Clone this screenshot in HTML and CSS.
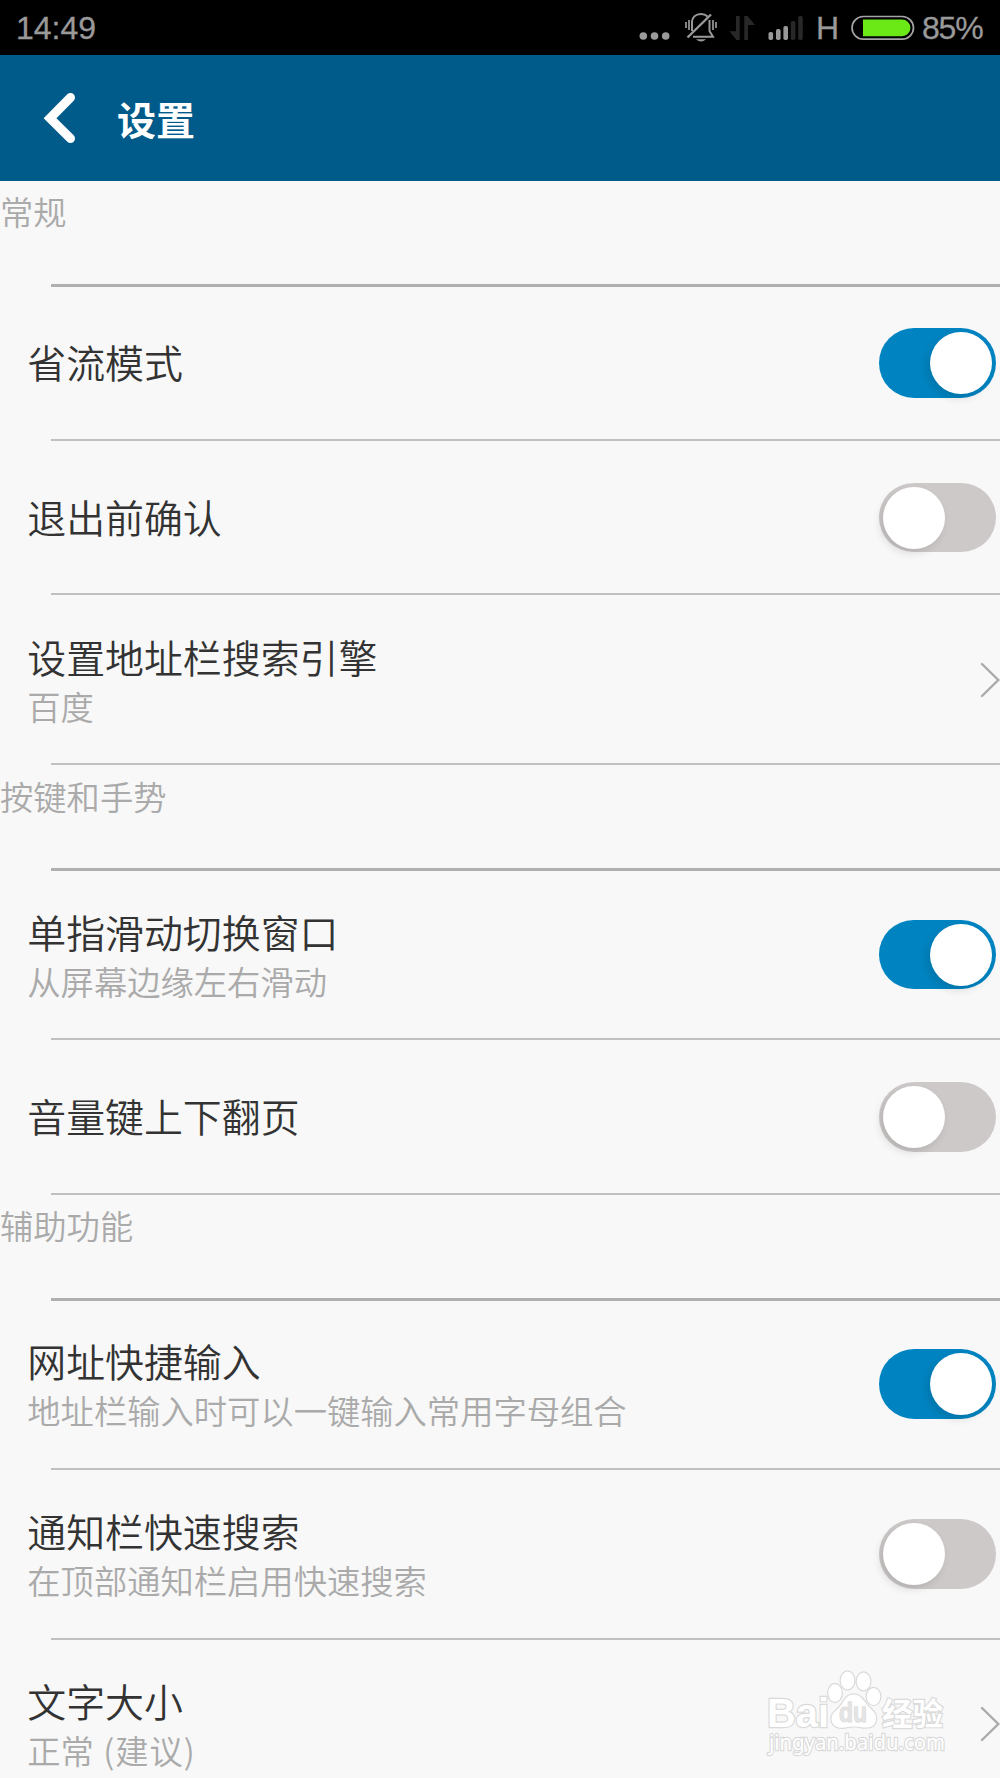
FILE: index.html
```html
<!DOCTYPE html>
<html lang="zh-CN">
<head>
    <meta charset="UTF-8">
    <meta name="viewport" content="width=device-width, initial-scale=1.0">
    <title>设置</title>
    <link rel="stylesheet" href="styles.css">
</head>
<body>
    <div class="status-bar">
        <span class="time">14:49</span>
        <svg class="status-icons" width="172" height="55" viewBox="635 0 172 55">
            <g fill="#999">
                <circle cx="643.3" cy="36" r="3.8"/>
                <circle cx="654.5" cy="36" r="3.8"/>
                <circle cx="665.7" cy="36" r="3.8"/>
            </g>
            <!-- muted bell -->
            <g fill="none" stroke="#999" stroke-width="2">
                <path d="M711 14.500 L687.500 37.500" stroke-width="2.400"/>
                <path d="M692 31 V23 C692 17 696 14 701 14 C704 14 706 15 707.500 16.500"/>
                <path d="M709.500 20 V31 L713 36.700 H693"/>
                <path d="M689 20 V30 M686 22 V28 M713 20 V30 M716 22 V28" stroke-width="1.700"/>
            </g>
            <path d="M696 39.200 H706 Q701 44 696 39.200Z" fill="#999"/>
            <!-- data arrows -->
            <path d="M736 16 h3.700 v24 h-3.200 l-7 -8.800 h6.500z M744.300 40 v-24 h3.200 l7.500 9 h-7 v15z" fill="#282828"/>
            <!-- signal -->
            <g fill="#999">
                <rect x="768.5" y="32" width="4.6" height="8" rx="1.8"/>
                <rect x="776" y="29" width="4.6" height="11" rx="1.8"/>
                <rect x="783.4" y="26" width="4.6" height="14" rx="1.8"/>
                <rect x="790.8" y="21" width="4.6" height="19" rx="1.8" fill="#282828"/>
                <rect x="798.2" y="16" width="4.6" height="24" rx="1.8" fill="#282828"/>
            </g>
        </svg>
        <span class="network">H</span>
        <svg class="battery" width="64" height="26" viewBox="0 0 64 26">
            <rect x="1" y="1.5" width="61.5" height="22.6" rx="11.3" fill="none" stroke="#a5a5a5" stroke-width="1.7"/>
            <path d="M12 4.500 H51 A8.400 8.400 0 0 1 51 21.300 H12Z" fill="#6ae916"/>
        </svg>
        <span class="percent">85%</span>
    </div>

    <div class="header">
        <svg class="back" width="32" height="52" viewBox="0 0 32 52">
            <path d="M27.500 5.500 L7 26.300 L27.500 46.500" fill="none" stroke="#fff" stroke-width="9" stroke-linecap="round"/>
        </svg>
        <h1>设置</h1>
    </div>

    <div class="settings">
        <h2 class="section">常规</h2>
        <div class="row single">
            <div class="title">省流模式</div>
            <div class="toggle on"></div>
        </div>
        <div class="row single">
            <div class="title">退出前确认</div>
            <div class="toggle"></div>
        </div>
        <div class="row">
            <div>
                <div class="title">设置地址栏搜索引擎</div>
                <div class="desc">百度</div>
            </div>
            <svg class="chevron" width="20" height="36" viewBox="0 0 20 36">
                <path d="M2 2 L18.300 18 L2 34" fill="none" stroke="#aaa" stroke-width="2.400" stroke-linecap="round"/>
            </svg>
        </div>

        <h2 class="section">按键和手势</h2>
        <div class="row">
            <div>
                <div class="title">单指滑动切换窗口</div>
                <div class="desc">从屏幕边缘左右滑动</div>
            </div>
            <div class="toggle on"></div>
        </div>
        <div class="row single">
            <div class="title">音量键上下翻页</div>
            <div class="toggle"></div>
        </div>

        <h2 class="section">辅助功能</h2>
        <div class="row">
            <div>
                <div class="title">网址快捷输入</div>
                <div class="desc">地址栏输入时可以一键输入常用字母组合</div>
            </div>
            <div class="toggle on"></div>
        </div>
        <div class="row">
            <div>
                <div class="title">通知栏快速搜索</div>
                <div class="desc">在顶部通知栏启用快速搜索</div>
            </div>
            <div class="toggle"></div>
        </div>
        <div class="row">
            <div>
                <div class="title">文字大小</div>
                <div class="desc">正常 <span class="hint">(建议)</span></div>
            </div>
            <svg class="chevron" width="20" height="36" viewBox="0 0 20 36">
                <path d="M2 2 L18.300 18 L2 34" fill="none" stroke="#aaa" stroke-width="2.400" stroke-linecap="round"/>
            </svg>
        </div>
    </div>

    <svg class="watermark" width="190" height="92" viewBox="0 0 190 92">
        <text class="brand" x="7" y="57" textLength="62" lengthAdjust="spacingAndGlyphs">Bai</text>
        <g class="paw">
            <ellipse cx="75" cy="23" rx="6.8" ry="9"/>
            <ellipse cx="87.5" cy="10.5" rx="6.8" ry="9"/>
            <ellipse cx="103.5" cy="11.5" rx="6.8" ry="9"/>
            <ellipse cx="113.5" cy="26.5" rx="6.8" ry="8.6"/>
            <path d="M93.500 24.500 C101 24.500 104 31 108 36 C113 41 117 44 116 50 C115 57 109 58 103 57.500 C97 56 91 56 85 57.500 C77 59 71 55 71.500 48 C72 42 78 40 82 34 C85 29 87 24.500 93.500 24.500Z"/>
        </g>
        <text class="du" x="79" y="52" textLength="28" lengthAdjust="spacingAndGlyphs">du</text>
        <text class="jingyan" x="122" y="55" textLength="61" lengthAdjust="spacingAndGlyphs">经验</text>
        <text class="url" x="9" y="80" textLength="176" lengthAdjust="spacingAndGlyphs">jingyan.baidu.com</text>
    </svg>
</body>
</html>
```
FILE: styles.css
```css
body {
    font-family: "Noto Sans CJK SC", sans-serif;
    background-color: #f8f8f8;
    color: #333;
    margin: 0;
    padding: 0;
    height: 1778px;
    position: relative;
    overflow: hidden;
}
.status-bar {
    display: flex;
    align-items: center;
    box-sizing: border-box;
    height: 55px;
    padding: 0 16px 0 16px;
    background-color: #000;
    color: #999;
    font-family: "Liberation Sans", Arial, sans-serif;
    font-size: 32px;
    line-height: 55px;
}
.time,
.network,
.percent {
    padding-top: 2px;
    -webkit-text-stroke: 0.3px #999;
}
.status-icons {
    margin-left: auto;
}
.network {
    margin-left: 9px;
    width: 23px;
}
.battery {
    margin-left: 12px;
}
.percent {
    margin-left: 7px;
    width: 62px;
    letter-spacing: -1.2px;
}
.header {
    display: flex;
    align-items: center;
    height: 125.5px;
    background-color: #005b8a;
    color: #fff;
}
.back {
    margin-left: 43px;
}
h1 {
    margin: 0 0 0 42px;
    font-size: 39px;
    line-height: 56px;
    font-weight: bold;
}
.section {
    height: 106.5px;
    margin: 0 0 -1px;
    box-sizing: border-box;
    padding-top: 5.5px;
    font-size: 33.3px;
    line-height: 50px;
    font-weight: 350;
    color: #aaa;
    background: linear-gradient(#b0b0b0, #b0b0b0) 51px 100% / 100% 3px no-repeat;
}
.section ~ .section {
    height: 106px;
}
.row {
    display: flex;
    align-items: center;
    justify-content: space-between;
    box-sizing: border-box;
    height: 170px;
    padding: 0 4px 1px 27.3px;
    background: linear-gradient(#c0c0c0, #c0c0c0) 51px 100% / 100% 2px no-repeat;
}
.row.single {
    height: 154.5px;
}
.title {
    font-size: 38.9px;
    line-height: 52px;
    font-weight: 350;
}
.single .title {
    padding-bottom: 3px;
}
.desc {
    font-size: 33.3px;
    line-height: 48px;
    font-weight: 350;
    color: #aaa;
    word-spacing: 2px;
}
.hint {
    letter-spacing: 0.9px;
}
.toggle {
    display: flex;
    box-sizing: border-box;
    width: 117px;
    height: 69.5px;
    padding: 4px;
    border-radius: 35px;
    background-color: #cdc9c9;
}
.toggle::before {
    content: "";
    width: 62px;
    height: 62px;
    border-radius: 50%;
    background-color: #fff;
    box-shadow: -3px 4px 8px rgba(0, 0, 0, 0.12);
}
.toggle.on {
    justify-content: flex-end;
    background-color: #0084c1;
}
.chevron {
    margin-right: -4px;
}
.watermark {
    position: absolute;
    left: 760px;
    top: 1670px;
    overflow: visible;
}
.watermark text,
.paw {
    fill: #fff;
    stroke: #dadada;
    stroke-width: 2.4px;
    paint-order: stroke;
}
.brand {
    font: bold 40px "Liberation Sans", sans-serif;
}
.watermark .du {
    font: bold 27px "Liberation Sans", sans-serif;
    fill: #e4e4e4;
    stroke: #d6d6d6;
    stroke-width: 1px;
}
.jingyan {
    font: bold 31px "Noto Sans CJK SC", sans-serif;
}
.url {
    font: 21px "Noto Sans", sans-serif;
}
```
